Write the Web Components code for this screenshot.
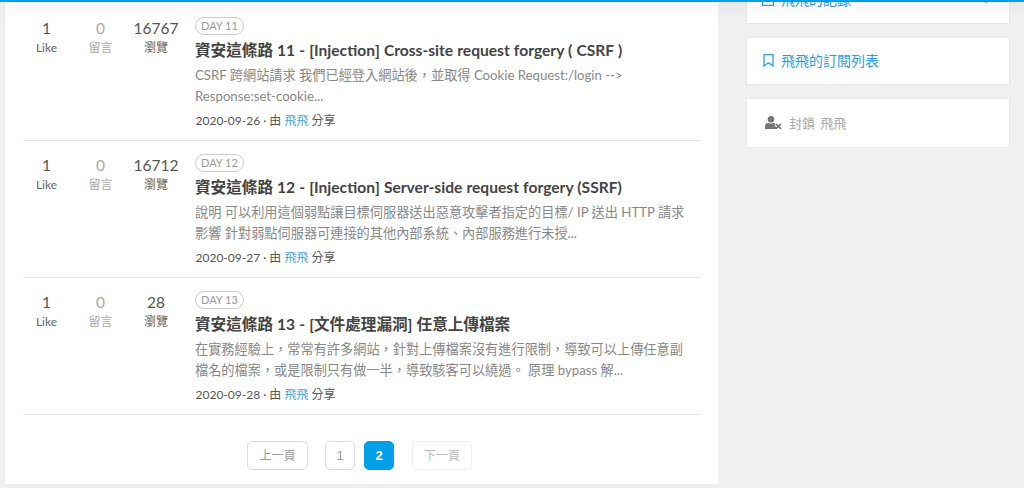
<!DOCTYPE html>
<html lang="zh-Hant">
<head>
<meta charset="utf-8">
<title>飛飛</title>
<style>
  html, body { margin: 0; height: 488px; overflow: hidden; background: #f0f0f0; }
  body { font-family: Lato, "Noto Sans CJK TC", sans-serif; color: #555; }
</style>
</head>
<body>
<page-shell>
  <article-list>
    <article-row like="1" comments="0" views="16767" day="DAY 11" date="2020-09-26">
      <span slot="title">資安這條路 11 - [Injection] Cross-site request forgery ( CSRF )</span>
      CSRF 跨網站請求 我們已經登入網站後，並取得 Cookie Request:/login --&gt;<br>Response:set-cookie...
    </article-row>
    <article-row like="1" comments="0" views="16712" day="DAY 12" date="2020-09-27">
      <span slot="title">資安這條路 12 - [Injection] Server-side request forgery (SSRF)</span>
      說明 可以利用這個弱點讓目標伺服器送出惡意攻擊者指定的目標/ IP 送出 HTTP 請求<br>影響 針對弱點伺服器可連接的其他內部系統、內部服務進行未授...
    </article-row>
    <article-row like="1" comments="0" views="28" day="DAY 13" date="2020-09-28">
      <span slot="title">資安這條路 13 - [文件處理漏洞] 任意上傳檔案</span>
      在實務經驗上，常常有許多網站，針對上傳檔案沒有進行限制，導致可以上傳任意副<br>檔名的檔案，或是限制只有做一半，導致駭客可以繞過。 原理 bypass 解...
    </article-row>
    <page-nav slot="nav"></page-nav>
  </article-list>
  <side-card slot="side" tone="link" icon="record" caret>飛飛的記錄</side-card>
  <side-card slot="side" tone="link" icon="bookmark">飛飛的訂閱列表</side-card>
  <side-card slot="side" tone="muted" icon="block">封鎖 飛飛</side-card>
</page-shell>

<script>
class PageShell extends HTMLElement {
  constructor() {
    super();
    this.attachShadow({ mode: "open" }).innerHTML = `
      <style>
        :host { display: block; position: relative; height: 488px; overflow: hidden; }
        .bar { position: absolute; top: 0; left: 0; right: 0; height: 2px; background: #00a0e9; box-shadow: 0 1px 16px rgba(0,0,0,.28); z-index: 2; }
        .wrap { display: flex; align-items: flex-start; padding-left: 5px; }
        .side { display: flex; flex-direction: column; gap: 13px; width: 264px; margin: -24px 0 0 28px; }
      </style>
      <div class="bar"></div>
      <div class="wrap">
        <slot></slot>
        <div class="side"><slot name="side"></slot></div>
      </div>`;
  }
}

class ArticleList extends HTMLElement {
  constructor() {
    super();
    this.attachShadow({ mode: "open" }).innerHTML = `
      <style>
        :host { display: block; width: 713px; height: 484px; background: #fff; box-sizing: border-box; padding: 4px 17px 0 18px; flex: none; }
      </style>
      <slot></slot>
      <slot name="nav"></slot>`;
  }
}

const rowTemplate = document.createElement("template");
rowTemplate.innerHTML = `
  <style>
    :host { display: flex; height: 137px; box-sizing: border-box; border-bottom: 1px solid #e6e6e6; padding-top: 13px; }
    .stats { display: flex; flex: none; width: 172px; align-items: flex-start; }
    .stat { text-align: center; }
    .stat:nth-child(1) { width: 47px; }
    .stat:nth-child(2) { width: 61px; }
    .stat:nth-child(3) { width: 50px; }
    .num { font-size: 15.5px; line-height: 22px; color: #555; }
    .lab { font-size: 12px; line-height: 16px; margin-top: 1px; color: #666; }
    .stat.dim .num, .stat.dim .lab { color: #aaa; }
    .body { flex: 1; min-width: 0; }
    .day { box-sizing: border-box; width: fit-content; height: 18px; line-height: 16px; padding: 0 5px; border: 1px solid #ccc; border-radius: 9px; font-size: 11px; color: #999; }
    .title { font-size: 15.6px; word-spacing: .3px; font-weight: 700; line-height: 24px; color: #444; margin-top: 3px; }
    .desc { font-size: 13.2px; line-height: 21px; color: #888; margin-top: 3px; white-space: nowrap; }
    .meta { font-size: 12px; line-height: 18px; color: #555; margin: 5px 0 0 .5px; }
    .meta a { color: #4a9fe0; text-decoration: none; }
  </style>
  <div class="stats">
    <div class="stat"><div class="num like"></div><div class="lab">Like</div></div>
    <div class="stat dim"><div class="num comments"></div><div class="lab">留言</div></div>
    <div class="stat"><div class="num views"></div><div class="lab">瀏覽</div></div>
  </div>
  <div class="body">
    <div class="day"></div>
    <div class="title"><slot name="title"></slot></div>
    <div class="desc"><slot></slot></div>
    <div class="meta"><span class="date"></span> · 由 <a href="#">飛飛</a> 分享</div>
  </div>`;

class ArticleRow extends HTMLElement {
  constructor() {
    super();
    const shadow = this.attachShadow({ mode: "open" });
    shadow.append(rowTemplate.content.cloneNode(true));
    shadow.querySelector(".like").textContent = this.getAttribute("like");
    shadow.querySelector(".comments").textContent = this.getAttribute("comments");
    shadow.querySelector(".views").textContent = this.getAttribute("views");
    shadow.querySelector(".day").textContent = this.getAttribute("day");
    shadow.querySelector(".date").textContent = this.getAttribute("date");
  }
}

class PageNav extends HTMLElement {
  constructor() {
    super();
    this.attachShadow({ mode: "open" }).innerHTML = `
      <style>
        :host { display: flex; justify-content: center; padding: 26px 5px 0 0; }
        .b { box-sizing: border-box; height: 29px; line-height: 28px; border: 1px solid #ddd; border-radius: 5px; font-size: 12px; color: #999; text-align: center; font-family: "Liberation Sans", "Noto Sans CJK TC", sans-serif; background: #fff; }
        .prev { width: 61px; margin-right: 17px; }
        .num { width: 30px; margin-right: 9px; font-size: 13px; }
        .on { background: #00a0e9; border-color: #00a0e9; color: #fff; font-weight: 700; margin-right: 18px; }
        .next { width: 60px; border-color: #f0f0f0; color: #bbb; }
      </style>
      <div class="b prev">上一頁</div>
      <div class="b num">1</div>
      <div class="b num on">2</div>
      <div class="b next">下一頁</div>`;
  }
}

const ICONS = {
  record: `<svg style="margin-left:-1px" width="12" height="13" viewBox="0 0 12 13" fill="none" stroke="currentColor" stroke-width="1.2"><rect x=".6" y=".6" width="10.8" height="11.8"/><path d="M3 5.5h6M3 8.5h6"/></svg>`,
  bookmark: `<svg width="11" height="13" viewBox="0 0 11 13" fill="none" stroke="currentColor" stroke-width="1.3"><path d="M1 .7h9v11.300L5.500 8.800 1 12z"/></svg>`,
  block: `<svg width="17" height="13" viewBox="0 0 17 13" fill="currentColor"><circle cx="6" cy="3.3" r="3.3"/><path d="M0 13v-2.800C0 8.100 1.500 6.800 3.300 6.800c.8.500 1.700.8 2.700.8s1.900-.3 2.700-.8c.5 0 1 .1 1.400.3-.5.8-.6 1.800-.1 2.600L12.300 13z"/><path d="M10.800 7.800l5.200 5M16 7.800l-5.200 5" fill="none" stroke="currentColor" stroke-width="1.7"/></svg>`
};

class SideCard extends HTMLElement {
  constructor() {
    super();
    const icon = ICONS[this.getAttribute("icon")];
    this.attachShadow({ mode: "open" }).innerHTML = `
      <style>
        :host { display: flex; align-items: center; gap: 7px; box-sizing: border-box; height: 48px; padding: 0 16px 2px; background: #fff; border: 1px solid #e9e9e9; font-size: 14px; }
        :host([tone="link"]) { color: #2a9fe6; }
        :host([tone="muted"]) { color: #aaa; height: 50px; padding-left: 18px; gap: 7px; font-size: 13px; word-spacing: 2px; }
        svg { display: block; flex: none; }
        :host([tone="muted"]) svg { color: #777; }
        .t { flex: 1; }
        .caret { width: 5px; height: 5px; border-right: 1px solid #999; border-bottom: 1px solid #999; transform: rotate(45deg); margin: 0 4px 0 0; }
      </style>
      ${icon}<span class="t"><slot></slot></span>${this.hasAttribute("caret") ? '<span class="caret"></span>' : ""}`;
  }
}

customElements.define("page-shell", PageShell);
customElements.define("article-list", ArticleList);
customElements.define("article-row", ArticleRow);
customElements.define("page-nav", PageNav);
customElements.define("side-card", SideCard);
</script>
</body>
</html>
